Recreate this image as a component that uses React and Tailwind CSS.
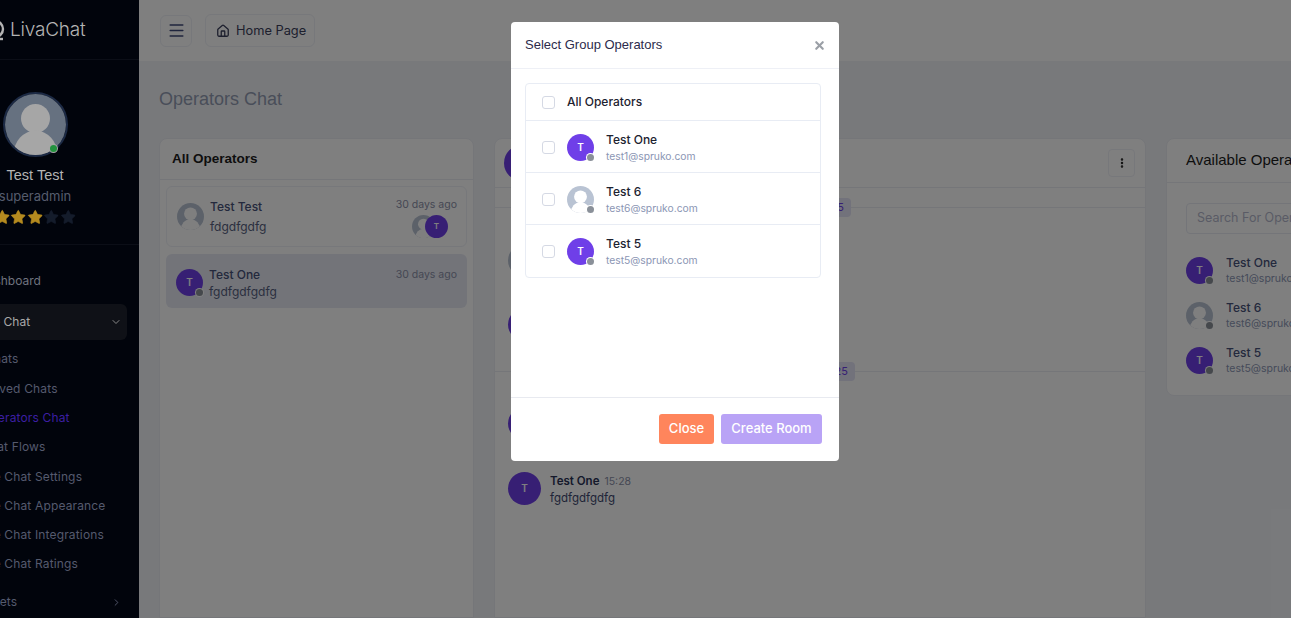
import React, { useId } from "react";
import { ChevronDown, ChevronRight, Menu, House, Star, EllipsisVertical, X } from "lucide-react";

const operators = [
  { name: "Test One", email: "test1@spruko.com", letter: "T" },
  { name: "Test 6", email: "test6@spruko.com" },
  { name: "Test 5", email: "test5@spruko.com", letter: "T" },
];

const subItems = [
  { label: "Chats", cls: "h-[30px] pl-[54px] text-[#555a6e]" },
  { label: "Solved Chats", cls: "h-[29px] pl-[50px] text-[#555a6e]" },
  { label: "Operators Chat", cls: "h-[29px] pl-[50px] text-[#3c1fa3]" },
  { label: "Chat Flows", cls: "h-[30px] pl-[50px] text-[#555a6e]" },
  { label: "Live Chat Settings", cls: "h-[29px] pl-[46px] text-[#555a6e]" },
  { label: "Live Chat Appearance", cls: "h-[29px] pl-[46px] text-[#555a6e]" },
  { label: "Live Chat Integrations", cls: "h-[29px] pl-[46px] text-[#555a6e]" },
  { label: "Live Chat Ratings", cls: "h-[29px] pl-[46px] text-[#555a6e]" },
];

// grey person placeholder
const Person = ({ size = 27, bg = "#b9c3d3", fg = "#ffffff" }) => {
  const id = useId();
  return (
    <svg width={size} height={size} viewBox="0 0 40 40" className="block shrink-0">
      <clipPath id={id}>
        <circle cx="20" cy="20" r="20" />
      </clipPath>
      <g clipPath={`url(#${id})`}>
        <rect width="40" height="40" fill={bg} />
        <circle cx="20" cy="16" r="9.5" fill={fg} />
        <ellipse cx="20" cy="40" rx="14.5" ry="16" fill={fg} />
      </g>
    </svg>
  );
};

const Avatar = ({ letter }) => (
  <div className="relative size-[27px] shrink-0">
    {letter ? (
      <div className="flex size-[27px] items-center justify-center rounded-full bg-[#6f3fe8] text-[10px] font-semibold text-white">
        {letter}
      </div>
    ) : (
      <Person size={27} />
    )}
    <span className="absolute right-0 bottom-0 size-[7px] rounded-full bg-[#8a9099] ring-1 ring-white" />
  </div>
);

const Sidebar = () => (
  <aside className="relative z-50 -ml-[69px] flex h-[618px] w-[208px] shrink-0 flex-col bg-[#01040c] font-[Inter]">
    <div className="flex h-[60px] shrink-0 items-center border-b border-[#0b0e17] pt-[1px] pl-[53px]">
      <svg width="22" height="22" viewBox="0 0 22 22" fill="none" stroke="#b4b4b4" strokeWidth="2.4" className="mr-[4px] shrink-0">
        <circle cx="11" cy="10" r="8" />
        <path d="M11 20h8" />
      </svg>
      <span className="text-[19px] font-light tracking-[-0.2px] text-[#b4b4b4]">LivaChat</span>
    </div>

    <div className="flex h-[185px] shrink-0 flex-col items-center border-b border-[#0b0e17] pt-[32px]">
      <div className="relative size-[65px] rounded-full border-2 border-[#1c2a45]">
        <Person size={61} bg="#667180" fg="#a6a6a6" />
        <span className="absolute right-[9px] bottom-[3px] size-[7px] rounded-full bg-[#22923e] ring-1 ring-[#a6a6a6]" />
      </div>
      <div className="mt-[9px] font-['Liberation_Sans'] text-[14.5px] leading-[18px] font-medium text-[#b4b4b4]">Test Test</div>
      <div className="mt-[3px] text-[13px] leading-[18px] text-[#565c6c]">superadmin</div>
      <div className="mt-[4px] flex">
        {[0, 1, 2, 3, 4].map((i) => (
          <Star
            key={i}
            size={16.5}
            strokeWidth={1}
            className={i < 3 ? "fill-[#b48a1f] text-[#b48a1f]" : "fill-[#141c2b] text-[#141c2b]"}
          />
        ))}
      </div>
    </div>

    <div className="flex h-[59px] shrink-0 items-end pb-[14px] pl-[48px] text-[12px] leading-[18px] text-[#6f737f]">Dashboard</div>

    <div className="mr-[12px] flex h-[36px] shrink-0 items-center justify-between rounded-r-md bg-[#0f1117] pr-[5px] pl-[46px] text-[12px] text-[#a8a8a8]">
      <span>Live Chat</span>
      <ChevronDown size={12} className="text-[#888]" />
    </div>

    <ul className="mt-[4px] shrink-0 text-[12px] leading-[18px] tracking-[0.15px]">
      {subItems.map((item) => (
        <li key={item.label} className={`flex items-center ${item.cls}`}>
          {item.label}
        </li>
      ))}
    </ul>

    <div className="mt-[15px] flex shrink-0 items-center justify-between pr-[17px] pl-[45px] text-[12px] leading-[18px] text-[#555a6e]">
      <span>Tickets</span>
      <ChevronRight size={11} />
    </div>
  </aside>
);

const TopBar = () => (
  <header className="flex h-[61px] shrink-0 items-center gap-[13px] bg-white pl-[21px]">
    <button className="flex h-[32px] w-[32px] items-center justify-center rounded-md border border-[#eef0f6] text-[#3f4a7a]">
      <Menu size={19} strokeWidth={1.8} />
    </button>
    <button className="flex h-[33px] w-[110px] items-center gap-[6px] rounded-md border border-[#eef0f6] pl-[10px] text-[12.8px] text-[#3b3f5c]">
      <House size={14} strokeWidth={2.2} />
      <span>Home Page</span>
    </button>
  </header>
);

const AllOperators = () => (
  <section className="h-[480px] w-[315px] shrink-0 rounded-t-lg border border-[#eaecf3] bg-white">
    <h3 className="flex h-[41px] items-center border-b border-[#eaecf3] pl-[12px] font-['Liberation_Sans'] text-[13.5px] font-bold text-[#1c1c1c]">
      All Operators
    </h3>
    <div className="flex flex-col gap-[7px] px-[6px] pt-[6px] text-[12px] text-[#56607f]">
      <div className="flex h-[61px] items-center gap-[6px] rounded-md border border-[#eef0f6] pr-[9px] pl-[10px]">
        <Person size={27} />
        <div className="flex-1 leading-[20px]">
          <div className="font-medium text-[#48527a]">Test Test</div>
          <div>fdgdfgdfg</div>
        </div>
        <div className="flex flex-col items-end leading-[18px] text-[#8b90a8]">
          <span className="text-[10.5px]">30 days ago</span>
          <div className="mt-[1px] mr-[9px] flex">
            <Person size={23} />
            <div className="-ml-[10px] flex size-[23px] items-center justify-center rounded-full bg-[#6f3fe8] text-[8px] font-semibold text-white">T</div>
          </div>
        </div>
      </div>
      <div className="flex h-[54px] items-center gap-[6px] rounded-md bg-[#e6e9f3] pt-[2px] pr-[10px] pl-[10px]">
        <Avatar letter="T" />
        <div className="mt-[1px] flex-1 leading-[17px]">
          <div className="font-medium text-[#48527a]">Test One</div>
          <div>fgdfgdfgdfg</div>
        </div>
        <span className="mb-[15px] text-[10.5px] text-[#8b90a8]">30 days ago</span>
      </div>
    </div>
  </section>
);

const Divider = ({ h, right, date }) => (
  <div className={`relative border-b border-[#eaecf3] ${h}`}>
    <span className={`absolute -bottom-[10px] rounded bg-[#e4e4f7] px-[7px] py-[3px] text-[11px] leading-[13px] text-[#6f3fe8] ${right}`}>
      {date}
    </span>
  </div>
);

const ChatPanel = () => (
  <section className="h-[480px] w-[652px] shrink-0 rounded-t-lg border border-[#eaecf3] bg-white">
    <div className="flex h-[49px] items-center justify-between border-b border-[#eaecf3] pr-[10px] pl-[9px]">
      <div className="size-[36px] rounded-full bg-[#6f3fe8]" />
      <button className="flex h-[28px] w-[27px] items-center justify-center rounded border border-[#eef0f6] text-[#222]">
        <EllipsisVertical size={12} strokeWidth={3} />
      </button>
    </div>
    <Divider h="h-[20px]" right="right-[294px]" date="12-02-2025" />
    <div className="flex h-[163px] flex-col gap-[31px] pt-[36px] pl-[13px]">
      <Person size={33} />
      <div className="size-[33px] rounded-full bg-[#6f3fe8]" />
    </div>
    <Divider h="h-0" right="right-[290px]" date="12-03-2025" />
    <div className="flex flex-col gap-[32px] pt-[35px] pl-[13px]">
      <div className="size-[33px] rounded-full bg-[#6f3fe8]" />
      <div className="flex gap-[9px]">
        <div className="flex size-[33px] shrink-0 items-center justify-center rounded-full bg-[#6f3fe8] text-[10px] font-semibold text-white">T</div>
        <div className="pt-[1px] text-[11.5px] leading-[16px]">
          <div className="flex items-baseline gap-[5px]">
            <span className="font-semibold text-[#2a3357]">Test One</span>
            <span className="text-[10.5px] text-[#8b90a8]">15:28</span>
          </div>
          <div className="text-[#3f4a70]">fgdfgdfgdfg</div>
        </div>
      </div>
    </div>
  </section>
);

const AvailableOperators = () => (
  <section className="h-[258px] w-[314px] shrink-0 rounded-lg border border-[#eaecf3] bg-white">
    <h3 className="flex h-[44px] items-center border-b border-[#eaecf3] pl-[19px] font-['Liberation_Sans'] text-[15px] text-[#1c1c1c]">
      Available Operators
    </h3>
    <div className="px-[19px] pt-[20px]">
      <div className="flex h-[31px] items-center rounded border border-[#e8eaf2] pl-[10px] text-[12.5px] text-[#b4b7cc]">
        Search For Operators
      </div>
      <div className="mt-[23px] flex flex-col gap-[18px]">
        {operators.map((op) => (
          <div key={op.name} className="flex h-[27px] items-center gap-[13px]">
            <Avatar letter={op.letter} />
            <div>
              <div className="text-[12px] leading-[16px] font-medium text-[#48527a]">{op.name}</div>
              <div className="text-[10.5px] leading-[16px] text-[#8b96b4]">{op.email}</div>
            </div>
          </div>
        ))}
      </div>
    </div>
  </section>
);

const Checkbox = () => (
  <span className="size-[13px] shrink-0 rounded-[3px] border border-[#d5d9e4] bg-white" />
);

const GroupModal = () => (
  <div className="absolute top-[22px] left-[511px] z-50 flex h-[439px] w-[328px] flex-col rounded bg-white font-[Inter]">
    <div className="flex h-[47px] shrink-0 items-center justify-between border-b border-[#eef0f6] pr-[13px] pl-[14px]">
      <h5 className="font-['Liberation_Sans'] text-[13px] text-[#2c2b4c]">Select Group Operators</h5>
      <X size={13} strokeWidth={4} className="text-[#9a9fa6]" />
    </div>
    <div className="flex-1 px-[14px] pt-[14px]">
      <ul className="w-[296px] rounded border border-[#e8ecf4]">
        <li className="flex h-[37px] items-center gap-[12px] border-b border-[#e8ecf4] pl-[16px] text-[12px] font-medium text-[#1d2230]">
          <Checkbox />
          All Operators
        </li>
        {operators.map((op, i) => (
          <li
            key={op.name}
            className={`flex h-[52px] items-center gap-[12px] pt-[1px] pl-[16px] ${i < 2 ? "border-b border-[#e8ecf4]" : ""}`}
          >
            <Checkbox />
            <Avatar letter={op.letter} />
            <div>
              <div className="text-[12px] leading-[17px] font-medium text-[#1d2230]">{op.name}</div>
              <div className="text-[10.3px] leading-[16px] text-[#8b96b4]">{op.email}</div>
            </div>
          </li>
        ))}
      </ul>
    </div>
    <div className="flex h-[64px] shrink-0 items-start justify-end gap-[7px] border-t border-[#e8eaf0] pt-[16px] pr-[17px] text-[13px] font-medium text-white">
      <button className="h-[30px] w-[55px] rounded-[3px] bg-[#ff855c]">Close</button>
      <button className="h-[30px] w-[101px] rounded-[3px] bg-[#b9a3f6]">Create Room</button>
    </div>
  </div>
);

export default function App() {
  return (
    <div className="relative flex h-[618px] overflow-hidden font-[Inter]">
      <Sidebar />
      <main className="flex min-w-0 flex-1 flex-col overflow-hidden bg-[#f1f3f7]">
        <TopBar />
        <h1 className="mt-[26px] h-[52px] pl-[20px] font-['Liberation_Sans'] text-[18px] leading-[24px] text-[#939cb3]">
          Operators Chat
        </h1>
        <div className="flex items-start gap-[20px] pl-[20px]">
          <AllOperators />
          <ChatPanel />
          <AvailableOperators />
        </div>
      </main>
      <div className="absolute inset-0 z-40 bg-black/50" />
      <GroupModal />
    </div>
  );
}
